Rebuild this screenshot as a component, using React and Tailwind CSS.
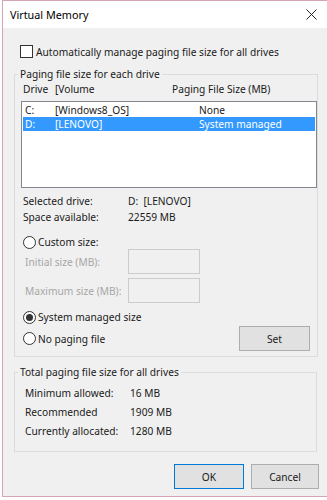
import React from 'react';

const font = { fontFamily: '"Noto Sans", "Open Sans", sans-serif' };

const Radio = ({ checked }) => (
    <span className="flex h-[13px] w-[13px] items-center justify-center rounded-full border border-[#333] bg-white">
        {checked && <span className="h-[7px] w-[7px] rounded-full bg-[#333]" />}
    </span>
);

const InfoRow = ({ label, value, className = '' }) => (
    <div className={`flex h-[14px] items-center whitespace-pre ${className}`}>
        <span className="w-[105px]">{label}</span>
        <span>{value}</span>
    </div>
);

const DisabledInput = ({ label, className = '' }) => (
    <div className={`flex h-[25px] items-center whitespace-nowrap ${className}`}>
        <span className="w-[103px] text-[#a6a6a6]">{label}</span>
        <div className="h-[25px] w-[72px] border border-[#cccccc] bg-[#f0f0f0]" />
    </div>
);

const App = () => {
    const drives = [
        { letter: 'C:', label: '[Windows8_OS]', size: 'None', selected: false },
        { letter: 'D:', label: '[LENOVO]', size: 'System managed', selected: true },
    ];

    return (
        <div className="h-[500px] w-[327px] bg-white text-[10.2px] leading-[14px] text-[#1a1a1a]" style={font}>
            <div className="ml-[2px] flex h-[497px] w-[325px] flex-col border-b border-l border-t border-[#d5a3b6]">
                {/* title bar */}
                <div className="flex h-[27px] items-center justify-between bg-white pl-[7px] pr-[9px]">
                    <span className="text-[10.8px] text-black">Virtual Memory</span>
                    <svg width="11" height="11" viewBox="0 0 11 11" className="mr-[1px]">
                        <path d="M0.5 0.5 L10.5 10.5 M10.5 0.5 L0.5 10.5" stroke="#222" strokeWidth="1" />
                    </svg>
                </div>

                <div className="flex-1 bg-[#f0f0f0] pl-[11px]">
                    <label className="mt-[17px] ml-[6px] flex h-[13px] items-center gap-[3px]">
                        <span className="h-[13px] w-[13px] border border-[#333] bg-white" />
                        <span>Automatically manage paging file size for all drives</span>
                    </label>

                    <fieldset className="mt-[9px] h-[290px] w-[303px] border border-[#dcdcdc]">
                        <legend className="ml-[3px] px-[2px]">Paging file size for each drive</legend>
                        <div className="mt-[1px] flex h-[14px] pl-[8px]">
                            <span className="w-[32px]">Drive</span>
                            <span className="w-[117px]">[Volume</span>
                            <span>Paging File Size (MB)</span>
                        </div>
                        <div className="mt-[5px] ml-[6px] h-[87px] w-[296px] border border-[#828790] bg-white pt-[1px]">
                            {drives.map((d) => (
                                <div
                                    key={d.letter}
                                    className={`mx-[1px] flex h-[14px] items-center pl-[2px] ${d.selected ? 'bg-[#3399ff] text-white' : ''}`}
                                >
                                    <span className="w-[30px]">{d.letter}</span>
                                    <span className="w-[144px]">{d.label}</span>
                                    <span>{d.size}</span>
                                </div>
                            ))}
                        </div>

                        <div className="pl-[8px]">
                            <InfoRow label="Selected drive:" value="D:  [LENOVO]" className="mt-[6px]" />
                            <InfoRow label="Space available:" value="22559 MB" className="mt-[2px]" />

                            <label className="mt-[11px] flex h-[14px] items-center gap-[2px]">
                                <Radio />
                                <span>Custom size:</span>
                            </label>
                            <DisabledInput label="Initial size (MB):" className="pl-[2px]" />
                            <DisabledInput label="Maximum size (MB):" className="mt-[4px] pl-[2px]" />

                            <label className="mt-[7px] flex h-[14px] items-center gap-[2px]">
                                <Radio checked />
                                <span>System managed size</span>
                            </label>
                            <div className="mt-[2px] flex items-center justify-between pr-[7px]">
                                <label className="flex h-[14px] items-center gap-[2px]">
                                    <Radio />
                                    <span>No paging file</span>
                                </label>
                                <button className="h-[25px] w-[71px] border border-[#adadad] bg-[#e1e1e1]">Set</button>
                            </div>
                        </div>
                    </fieldset>

                    <fieldset className="mt-[8px] h-[87px] w-[303px] border border-[#dcdcdc]">
                        <legend className="ml-[3px] px-[2px]">Total paging file size for all drives</legend>
                        <div className="flex flex-col gap-[5px] pl-[10px] pt-[7px]">
                            <InfoRow label="Minimum allowed:" value="16 MB" />
                            <InfoRow label="Recommended" value="1909 MB" />
                            <InfoRow label="Currently allocated:" value="1280 MB" />
                        </div>
                    </fieldset>

                    <div className="mt-[12px] flex justify-end gap-[7px] pr-[8px]">
                        <button className="h-[25px] w-[70px] border border-[#0078d7] bg-[#e1e1e1]">OK</button>
                        <button className="h-[25px] w-[68px] border border-[#adadad] bg-[#e1e1e1]">Cancel</button>
                    </div>
                </div>
            </div>
        </div>
    );
};

export default App;
